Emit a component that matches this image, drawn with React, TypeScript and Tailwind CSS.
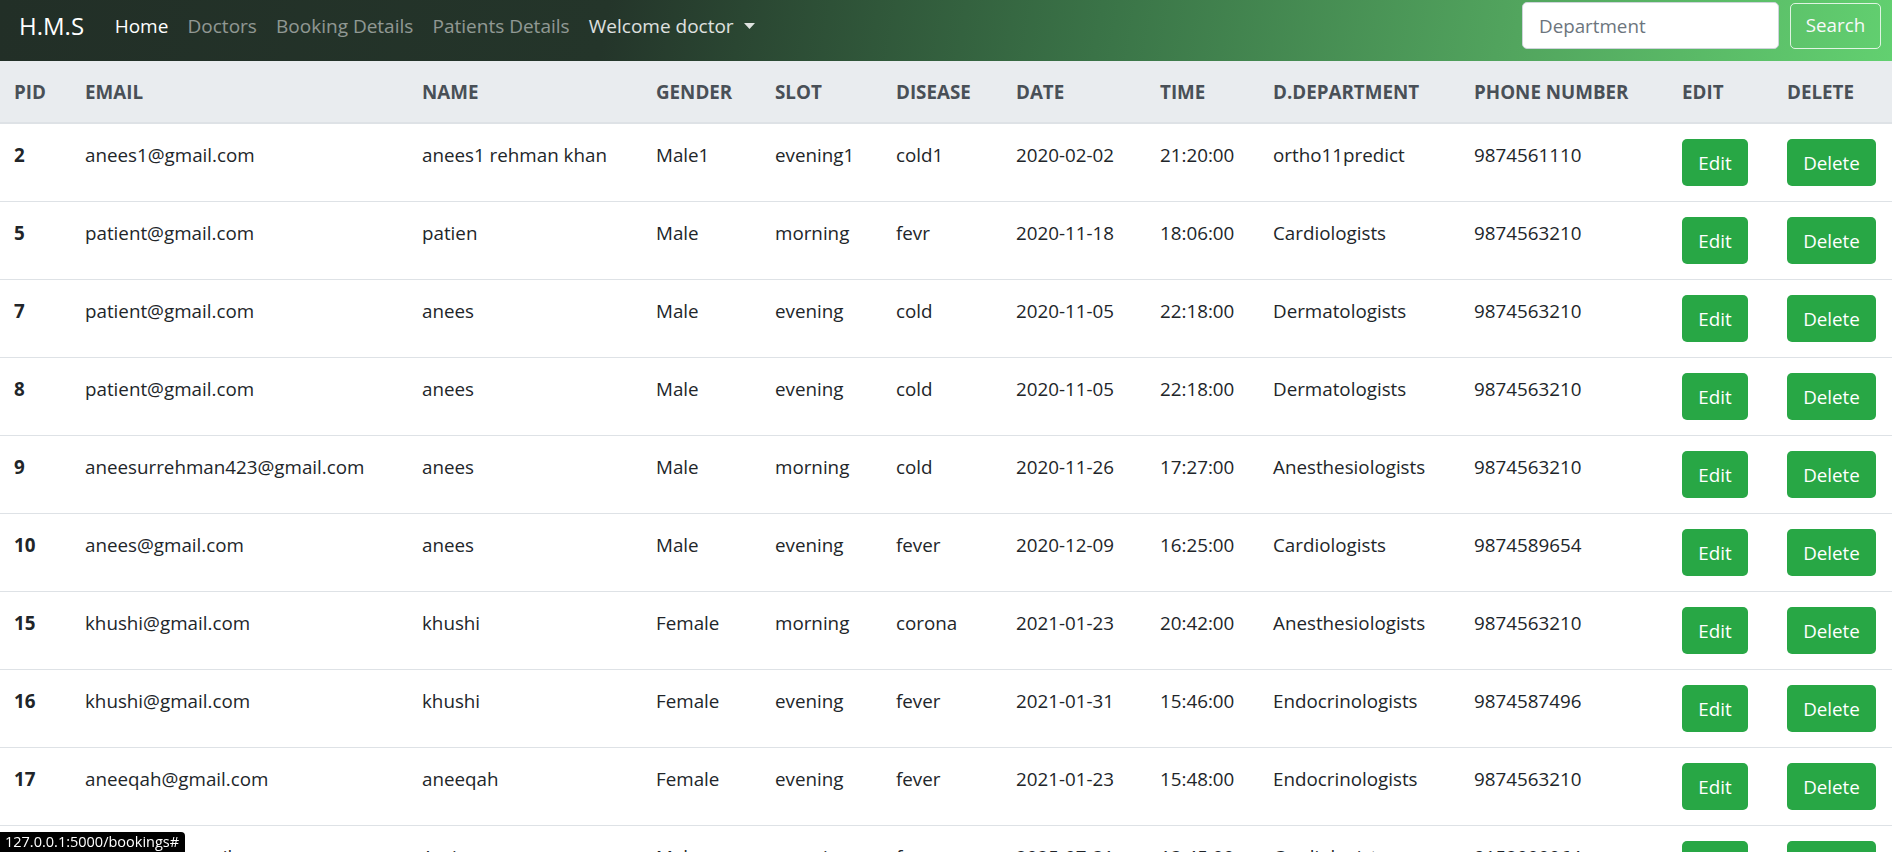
const rows = [
  ["2", "anees1@gmail.com", "anees1 rehman khan", "Male1", "evening1", "cold1", "2020-02-02", "21:20:00", "ortho11predict", "9874561110"],
  ["5", "patient@gmail.com", "patien", "Male", "morning", "fevr", "2020-11-18", "18:06:00", "Cardiologists", "9874563210"],
  ["7", "patient@gmail.com", "anees", "Male", "evening", "cold", "2020-11-05", "22:18:00", "Dermatologists", "9874563210"],
  ["8", "patient@gmail.com", "anees", "Male", "evening", "cold", "2020-11-05", "22:18:00", "Dermatologists", "9874563210"],
  ["9", "aneesurrehman423@gmail.com", "anees", "Male", "morning", "cold", "2020-11-26", "17:27:00", "Anesthesiologists", "9874563210"],
  ["10", "anees@gmail.com", "anees", "Male", "evening", "fever", "2020-12-09", "16:25:00", "Cardiologists", "9874589654"],
  ["15", "khushi@gmail.com", "khushi", "Female", "morning", "corona", "2021-01-23", "20:42:00", "Anesthesiologists", "9874563210"],
  ["16", "khushi@gmail.com", "khushi", "Female", "evening", "fever", "2021-01-31", "15:46:00", "Endocrinologists", "9874587496"],
  ["17", "aneeqah@gmail.com", "aneeqah", "Female", "evening", "fever", "2021-01-23", "15:48:00", "Endocrinologists", "9874563210"],
  ["18", "aarim123@gmail.com", "Aarim", "Male", "morning", "fever", "2025-07-31", "13:45:00", "Cardiologists", "9152000064"],
];

const headers = ["PID", "EMAIL", "NAME", "GENDER", "SLOT", "DISEASE", "DATE", "TIME", "D.DEPARTMENT", "PHONE NUMBER", "EDIT", "DELETE"];

const Navbar = () => {
  return (
    <nav className="h-[61px] bg-[linear-gradient(100deg,#222f27_0%,#24352a_32%,#3a7347_58%,#52a55e_80%,#62d070_100%)]">
      <div className="flex h-[51px] items-center pl-[19px] pr-[11px]">
        <a href="#" className="text-[24px] leading-[36px] text-white">H.M.S</a>
        <ul className="ml-[21px] flex items-center text-[19px] leading-[28px]">
          <li className="px-[9.6px] text-white">Home</li>
          <li className="px-[9.6px] text-white/50">Doctors</li>
          <li className="px-[9.6px] text-white/50">Booking Details</li>
          <li className="px-[9.6px] text-white/50">Patients Details</li>
          <li className="flex items-center px-[9.6px] text-white/85">
            Welcome doctor
            <svg width="11" height="6" viewBox="0 0 11 6" className="ml-[10px]">
              <path d="M0 0h11L5.5 6z" fill="currentColor" />
            </svg>
          </li>
        </ul>
        <div className="ml-auto flex items-center gap-[11px]">
          <input
            placeholder="Department"
            className="h-[47px] w-[257px] rounded-[5px] border border-[#ced4da] bg-white px-[16px] text-[18.8px] text-[#495057] placeholder:text-[#6c757d] outline-none"
          />
          <button className="h-[46px] w-[91px] rounded-[5px] border border-white/80 text-[18.8px] text-[#f8f9fa]">
            Search
          </button>
        </div>
      </div>
    </nav>
  );
};

const App = () => {
  return (
    <div className="min-h-screen bg-white font-['Segoe_UI','Open_Sans',sans-serif] text-[#212529]">
      <Navbar />
      <table className="w-full table-fixed border-collapse text-[18.8px] leading-[28px]">
        <colgroup>
          <col className="w-[71px]" />
          <col className="w-[337px]" />
          <col className="w-[234px]" />
          <col className="w-[119px]" />
          <col className="w-[121px]" />
          <col className="w-[120px]" />
          <col className="w-[144px]" />
          <col className="w-[113px]" />
          <col className="w-[201px]" />
          <col className="w-[208px]" />
          <col className="w-[105px]" />
          <col />
        </colgroup>
        <thead>
          <tr className="bg-[#e9ecef] text-[#495057]">
            {headers.map((h) => (
              <th key={h} className="border-b-2 border-[#dee2e6] px-[14px] pb-[16px] pt-[17px] text-left font-bold">
                {h}
              </th>
            ))}
          </tr>
        </thead>
        <tbody>
          {rows.map((r, i) => (
            <tr key={i} className="border-t border-[#dee2e6]">
              {r.map((c, j) => (
                <td
                  key={j}
                  className={`px-[14px] pt-[17px] align-top whitespace-nowrap ${j === 0 ? "font-bold" : ""}`}
                >
                  {c}
                </td>
              ))}
              <td className="px-[14px] py-[15px] align-top">
                <button className="h-[47px] w-[66px] rounded-[5px] bg-[#28a745] text-white">Edit</button>
              </td>
              <td className="px-[14px] py-[15px] align-top">
                <button className="h-[47px] w-[89px] rounded-[5px] bg-[#28a745] text-white">Delete</button>
              </td>
            </tr>
          ))}
        </tbody>
      </table>
      <div className="fixed bottom-0 left-0 h-[20px] w-[185px] rounded-tr-[4px] bg-black pl-[5px] text-[14.5px] leading-[20px] text-white">
        127.0.0.1:5000/bookings#
      </div>
    </div>
  );
};

export default App;
